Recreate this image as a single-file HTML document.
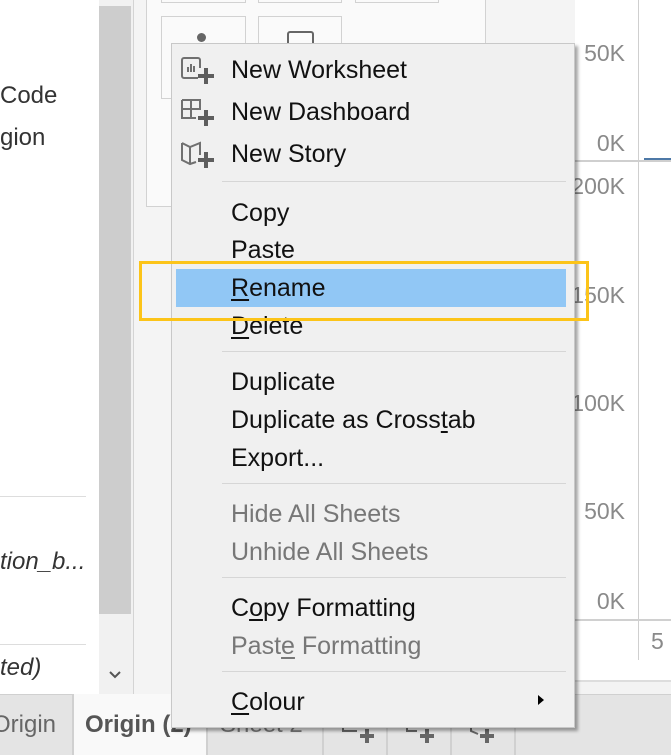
<!DOCTYPE html>
<html><head><meta charset="utf-8"><style>
*{margin:0;padding:0;box-sizing:border-box}
body{width:671px;height:755px;overflow:hidden;position:relative;background:#fff;font-family:"Liberation Sans",sans-serif}
.a{position:absolute}
.t{position:absolute;font-size:25px;color:#111;white-space:nowrap;line-height:28px}
.g{color:#777}
.sep{position:absolute;left:222px;width:344px;height:1px;background:#d6d6d6}
.ax{position:absolute;font-size:23px;color:#8a8a8a;text-align:right;width:80px;left:545px;line-height:26px}
u{text-decoration:underline;text-underline-offset:3px}
</style></head><body>
<div class="t" style="left:0;top:82px;color:#333;font-size:24px">Code</div>
<div class="t" style="left:0;top:124px;color:#333;font-size:24px">gion</div>
<div class="a" style="left:0;top:496px;width:86px;height:1px;background:#ddd"></div>
<div class="t" style="left:0;top:548px;color:#333;font-style:italic;font-size:24px">tion_b...</div>
<div class="a" style="left:0;top:644px;width:86px;height:1px;background:#ddd"></div>
<div class="t" style="left:0;top:654px;color:#333;font-style:italic;font-size:24px">ted)</div>
<div class="a" style="left:99px;top:0;width:34px;height:694px;background:#f1f1f1"></div>
<div class="a" style="left:99px;top:6px;width:32px;height:608px;background:#cdcdcd"></div>
<svg class="a" style="left:108px;top:670px" width="14" height="10"><path d="M2 2l5 5 5-5" stroke="#555" stroke-width="2" fill="none"/></svg>
<div class="a" style="left:133px;top:0;width:1px;height:694px;background:#d4d4d4"></div>
<div class="a" style="left:134px;top:0;width:441px;height:694px;background:#f4f4f4"></div>
<div class="a" style="left:146px;top:-2px;width:340px;height:209px;border:1px solid #d2d2d2;background:#fafafa"></div>
<div class="a" style="left:161px;top:-10px;width:85px;height:13px;border:1px solid #d2d2d2"></div>
<div class="a" style="left:258px;top:-10px;width:84px;height:13px;border:1px solid #d2d2d2"></div>
<div class="a" style="left:355px;top:-10px;width:84px;height:13px;border:1px solid #d2d2d2"></div>
<div class="a" style="left:161px;top:16px;width:85px;height:83px;border:1px solid #d2d2d2"></div>
<div class="a" style="left:258px;top:16px;width:84px;height:83px;border:1px solid #d2d2d2"></div>
<div class="a" style="left:197px;top:33px;width:9px;height:9px;border-radius:50%;background:#666"></div>
<div class="a" style="left:287px;top:31px;width:27px;height:20px;border:2px solid #666;border-radius:3px"></div>
<div class="a" style="left:575px;top:160px;width:96px;height:2px;background:#cfcfcf"></div>
<div class="a" style="left:638px;top:0;width:1px;height:660px;background:#cfcfcf"></div>
<div class="a" style="left:644px;top:158px;width:27px;height:2px;background:#4e79a7"></div>
<div class="a" style="left:575px;top:619px;width:96px;height:2px;background:#d0d0d0"></div>
<div class="a" style="left:575px;top:680px;width:96px;height:2px;background:#ddd"></div>
<div class="a" style="left:575px;top:682px;width:96px;height:12px;background:#f3f3f3"></div>
<div class="ax" style="top:40px">50K</div>
<div class="ax" style="top:130px">0K</div>
<div class="ax" style="top:173px">200K</div>
<div class="ax" style="top:282px">150K</div>
<div class="ax" style="top:390px">100K</div>
<div class="ax" style="top:498px">50K</div>
<div class="ax" style="top:588px">0K</div>
<div class="a" style="left:651px;top:628px;font-size:23px;color:#8a8a8a">5</div>
<div class="a" style="left:0;top:694px;width:671px;height:61px;background:#e4e4e4;border-top:1px solid #d0d0d0"></div>
<div class="a" style="left:72px;top:694px;width:136px;height:61px;background:#f9f9f9;border-left:2px solid #d0d0d0;border-right:2px solid #d0d0d0"></div>
<div class="t" style="left:-8px;top:711px;color:#666;font-size:24px">Origin</div>
<div class="t" style="left:85px;top:711px;color:#555;font-weight:bold;font-size:24px">Origin (2)</div>
<div class="t" style="left:220px;top:711px;color:#777;font-size:24px">Sheet 2</div>
<div class="a" style="left:322px;top:694px;width:2px;height:61px;background:#d0d0d0"></div>
<div class="a" style="left:386px;top:694px;width:2px;height:61px;background:#d0d0d0"></div>
<div class="a" style="left:450px;top:694px;width:2px;height:61px;background:#d0d0d0"></div>
<div class="a" style="left:514px;top:694px;width:2px;height:61px;background:#d0d0d0"></div>
<svg class="a" style="left:340px;top:725px" width="170" height="20" fill="none" stroke="#666" stroke-width="2">
<path d="M3 0v6h14"/><path d="M27 4v14M20 11h14" stroke-width="4"/>
<path d="M67 0v6h10"/><path d="M87 4v14M80 11h14" stroke-width="4"/>
<path d="M131 0v6l7 3"/><path d="M147 4v14M140 11h14" stroke-width="4"/>
</svg>
<div class="a" style="left:171px;top:43px;width:404px;height:685px;background:#f0f0f0;border:1px solid #c8c8c8;box-shadow:3px 3px 3px rgba(0,0,0,.35)"></div>
<svg class="a" style="left:180px;top:50px" width="36" height="130" fill="none" stroke="#707070" stroke-width="2">
<path d="M18 28H4a2 2 0 0 1-2-2V10a2 2 0 0 1 2-2h14a2 2 0 0 1 2 2v8"/><path d="M8 22v-5M11 22v-8M14 22v-6"/>
<path d="M26 18v16M18 26h16" stroke="#5e5e5e" stroke-width="4"/>
<path d="M2 50h18v10M2 50v18h14M11 50v18M2 59h18"/>
<path d="M26 60v16M18 68h16" stroke="#5e5e5e" stroke-width="4"/>
<path d="M2 93l8 4 10-4v12M2 93v17l8 4 6-2M10 97v17"/>
<path d="M26 102v16M18 110h16" stroke="#5e5e5e" stroke-width="4"/>
</svg>
<div class="t" style="left:231px;top:56px">New Worksheet</div>
<div class="t" style="left:231px;top:98px">New Dashboard</div>
<div class="t" style="left:231px;top:140px">New Story</div>
<div class="sep" style="top:181px"></div>
<div class="t" style="left:231px;top:199px">Copy</div>
<div class="t" style="left:231px;top:236px">Paste</div>
<div class="a" style="left:176px;top:269px;width:390px;height:38px;background:#91c7f5"></div>
<div class="t" style="left:231px;top:274px"><u>R</u>ename</div>
<div class="t" style="left:231px;top:312px"><u>D</u>elete</div>
<div class="a" style="left:139px;top:261px;width:450px;height:60px;border:3px solid #fcc419"></div>
<div class="sep" style="top:351px"></div>
<div class="t" style="left:231px;top:368px">Duplicate</div>
<div class="t" style="left:231px;top:406px">Duplicate as Cross<u>t</u>ab</div>
<div class="t" style="left:231px;top:444px">Export...</div>
<div class="sep" style="top:483px"></div>
<div class="t g" style="left:231px;top:500px">Hide All Sheets</div>
<div class="t g" style="left:231px;top:538px">Unhide All Sheets</div>
<div class="sep" style="top:577px"></div>
<div class="t" style="left:231px;top:594px">C<u>o</u>py Formatting</div>
<div class="t g" style="left:231px;top:632px">Past<u>e</u> Formatting</div>
<div class="sep" style="top:671px"></div>
<div class="t" style="left:231px;top:688px"><u>C</u>olour</div>
<div class="a" style="left:538px;top:695px;width:0;height:0;border-top:5px solid transparent;border-bottom:5px solid transparent;border-left:6px solid #000"></div>
</body></html>
